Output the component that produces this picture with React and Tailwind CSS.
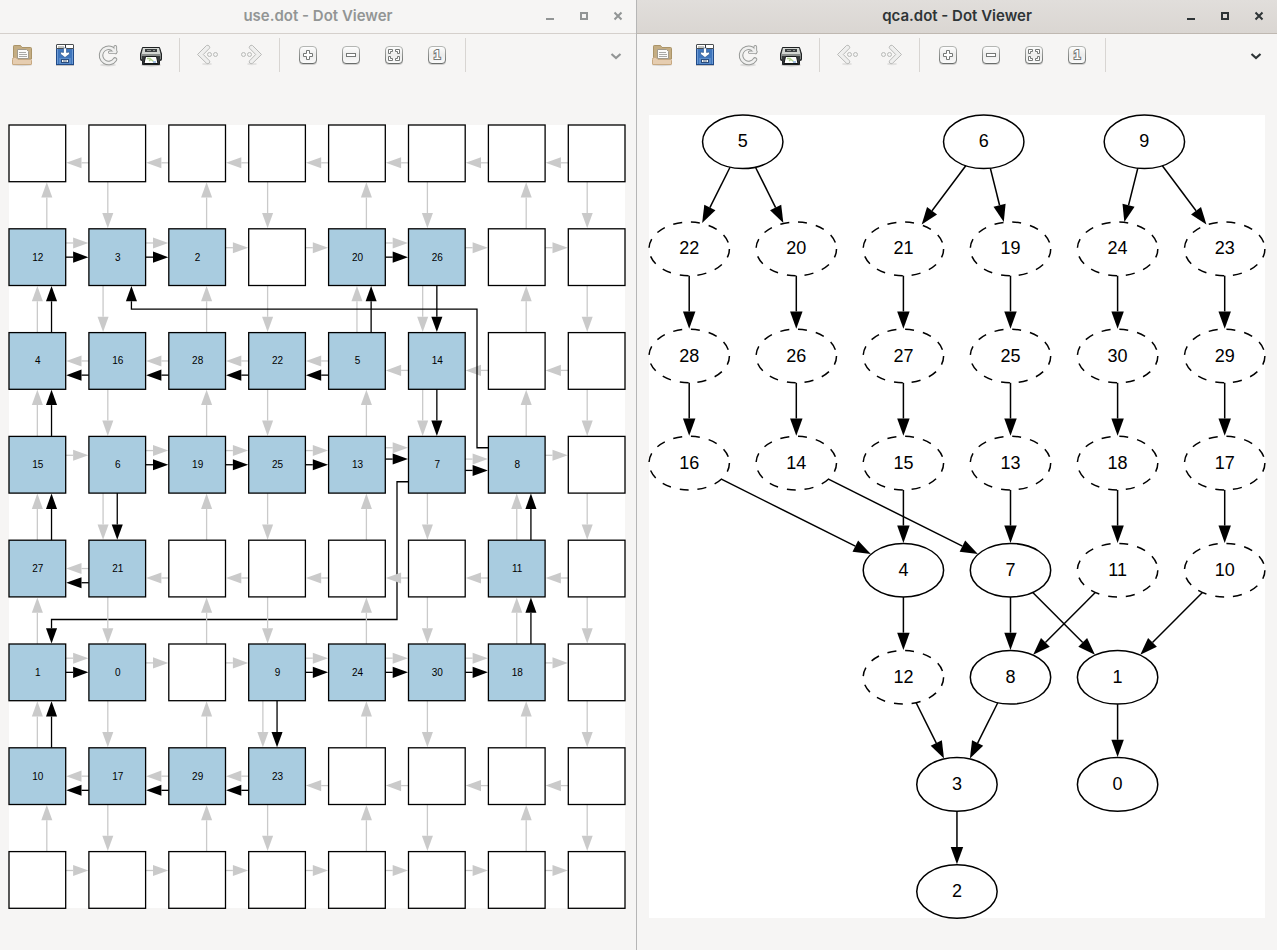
import React, { useId } from "react";

/* ---------- toolbar icons ---------- */

function OpenIcon() {
  return (
    <svg viewBox="0 0 24 24" className="size-6" aria-hidden="true">
      <ellipse cx="12" cy="22" rx="10" ry="1.2" fill="#000" opacity="0.12" />
      <path d="M3.5 20V3.2Q3.5 2.5 4.2 2.5H10.5L12 4.5H20.5Q21.5 4.5 21.5 5.5V16H3.5Z" fill="#c4ad83" stroke="#ab9468" />
      <path d="M7.5 15.5V6.5H16.5L18.5 8.5V15.5Z" fill="#fbfbfa" stroke="#a19a8c" />
      <path d="M9 9.5H16M9 11.5H17M9 13.5H17" stroke="#a9a9a6" />
      <path d="M2.5 21V16.5Q2.5 14.5 4.2 14.5H6L8 16.5H20.5Q21.5 16.5 21.5 17.5V21Q21.5 21.5 21 21.5H3Q2.5 21.5 2.5 21Z" fill="#e6cdb0" stroke="#c7a982" />
    </svg>
  );
}

function SaveIcon() {
  return (
    <svg viewBox="0 0 24 24" className="size-6" aria-hidden="true">
      <path d="M3 22.5H21" stroke="#000" opacity="0.2" />
      <rect x="3.5" y="5.5" width="17" height="16" fill="#3f76bd" stroke="#204a87" />
      <path d="M4.5 6V21M19.5 6V21" stroke="#6e9bd4" />
      <rect x="3.5" y="1.5" width="17" height="4" rx="0.5" fill="#fff" stroke="#4a4d4f" />
      <path d="M5 4H11" stroke="#c5c7c4" strokeWidth="2" />
      <path d="M12.5 2V5" stroke="#333" />
      <rect x="6" y="15" width="12" height="6" fill="#5b8cc9" />
      <path d="M10.5 5V9.5L7.5 9V11L12 14.5L16.5 11V9L13.5 9.5V5Z" fill="#fff" stroke="#2a4f80" strokeWidth="0.6" />
      <rect x="8.5" y="16.5" width="7" height="3" fill="#f4f4f2" stroke="#2a4c7c" />
      <path d="M10 18H14" stroke="#58718f" />
    </svg>
  );
}

function ReloadIcon() {
  const ring = "M19 16.5A7.6 7.6 0 1 1 16 5.6L19.3 8.8";
  const hook = "M19.3 3.8V9.3H13.8";
  return (
    <svg viewBox="0 0 24 24" className="size-6" fill="none" strokeLinecap="round" strokeLinejoin="round" aria-hidden="true">
      <ellipse cx="12" cy="22" rx="8" ry="1.5" fill="#000" opacity="0.1" />
      <g stroke="#979997">
        <path d={ring} strokeWidth="4.6" />
        <path d={hook} strokeWidth="3.6" />
      </g>
      <g stroke="#f0f0ef">
        <path d={ring} strokeWidth="2.6" />
        <path d={hook} strokeWidth="1.8" />
      </g>
    </svg>
  );
}

function PrintIcon() {
  return (
    <svg viewBox="0 0 24 24" className="size-6" aria-hidden="true">
      <ellipse cx="12" cy="22" rx="10" ry="1.5" fill="#000" opacity="0.2" />
      <path d="M3.5 4.5H20.5L22.5 11V16.5Q22.5 17.5 21.5 17.5H20.5V21.5H3.5V17.5H2.5Q1.5 17.5 1.5 16.5V11Z" fill="#35393a" stroke="#1e2122" />
      <path d="M4 5H20L21.5 11H2.5Z" fill="#d3d6d2" />
      <rect x="6" y="6" width="12" height="3" fill="#3a3e3f" />
      <path d="M8 7.5H12M14 7.5H16" stroke="#8f9390" />
      <path d="M2 12H22" stroke="#888c8a" strokeWidth="2" />
      <path d="M2.5 13V16M21.5 13V16" stroke="#7e8280" />
      <path d="M6.5 13.5H17.5L19 20.5H5Z" fill="#fff" stroke="#131516" />
      <path d="M8 15.5H11L14.5 18.5M10 18L12 16" fill="none" stroke="#b4d493" strokeWidth="1.4" />
      <path d="M14 19H17" stroke="#8aaedb" strokeWidth="1.5" />
    </svg>
  );
}

function BackIcon({ flip }) {
  return (
    <svg viewBox="0 0 24 24" className={flip ? "size-6 -scale-x-100" : "size-6"} aria-hidden="true">
      <ellipse cx="11" cy="21" rx="5" ry="1.2" fill="#000" opacity="0.08" />
      <path d="M1.5 11.5L10.5 2.5Q12 1.7 13.3 3.2Q14.2 4.3 13.5 5.2L7.3 11.5L13.5 17.8Q14.2 18.9 13.3 20Q12 21.3 10.5 20.3Z" fill="#efefee" stroke="#b9bab8" />
      <circle cx="13.5" cy="11.5" r="2" fill="#f3f3f2" stroke="#b9bab8" />
      <circle cx="19.5" cy="11.5" r="2" fill="#f3f3f2" stroke="#b9bab8" />
    </svg>
  );
}

function KeyIcon({ children }) {
  const id = useId();
  return (
    <svg viewBox="0 0 24 24" className="size-6" aria-hidden="true">
      <defs>
        <linearGradient id={`${id}edge`} x1="0" y1="0" x2="0" y2="1">
          <stop offset="0" stopColor="#b4b6b3" />
          <stop offset="1" stopColor="#6a6d6b" />
        </linearGradient>
        <linearGradient id={`${id}face`} x1="0" y1="0" x2="0" y2="1">
          <stop offset="0" stopColor="#fefefe" />
          <stop offset="0.5" stopColor="#ececeb" />
          <stop offset="1" stopColor="#fbfbfb" />
        </linearGradient>
      </defs>
      <rect x="3" y="4" width="18" height="18" rx="4" fill="#000" opacity="0.15" />
      <rect x="3.5" y="3.5" width="17" height="17" rx="3.5" fill={`url(#${id}face)`} stroke={`url(#${id}edge)`} />
      {children}
    </svg>
  );
}

const glyph = { fill: "#fff", stroke: "#757876", strokeWidth: 1 };

function ZoomInIcon() {
  return (
    <KeyIcon>
      <path d="M10.5 7.5H13.5V10.5H16.5V13.5H13.5V16.5H10.5V13.5H7.5V10.5H10.5Z" {...glyph} />
    </KeyIcon>
  );
}

function ZoomOutIcon() {
  return (
    <KeyIcon>
      <rect x="7.5" y="10.5" width="9" height="3" {...glyph} />
    </KeyIcon>
  );
}

function ZoomFitIcon() {
  return (
    <KeyIcon>
      <path d="M6.5 6.5H10.5V8.5H8.5V10.5H6.5Z" {...glyph} />
      <path d="M13.5 6.5H17.5V10.5H15.5V8.5H13.5Z" {...glyph} />
      <path d="M6.5 13.5H8.5V15.5H10.5V17.5H6.5Z" {...glyph} />
      <path d="M15.5 13.5H17.5V17.5H13.5V15.5H15.5Z" {...glyph} />
    </KeyIcon>
  );
}

function ZoomOneIcon() {
  return (
    <KeyIcon>
      <text
        x="12"
        y="16"
        textAnchor="middle"
        fill="#fff"
        stroke="#757876"
        strokeWidth="2"
        paintOrder="stroke"
        className="font-['Liberation_Sans',sans-serif] text-[12px] font-bold"
      >
        1
      </text>
    </KeyIcon>
  );
}

/* ---------- window chrome ---------- */

function ToolButton({ label, children, disabled }) {
  return (
    <button type="button" aria-label={label} disabled={disabled} className="size-6 shrink-0">
      {children}
    </button>
  );
}

function Separator() {
  return <div role="separator" className="mx-4 h-[34px] w-px shrink-0 bg-[#d8d5d2]" />;
}

function WindowButton({ label, children }) {
  return (
    <button type="button" aria-label={label} className="flex h-8 w-[34px] items-center justify-center">
      <svg viewBox="0 0 16 16" className="size-4" fill="none" stroke="currentColor" strokeWidth="2" aria-hidden="true">
        {children}
      </svg>
    </button>
  );
}

function Window({ title, active, className, toolbarClass, canvasClass, children }) {
  return (
    <section aria-label={title} className={`flex min-w-0 flex-col bg-[#f6f5f4] ${className}`}>
      <header
        className={`grid h-[34px] grid-cols-[1fr_auto_1fr] items-center border-b pb-1 ${
          active
            ? "border-[#bfb8b1] bg-linear-to-b from-[#e1dedb] to-[#dad6d2] text-[#2e3436]"
            : "border-[#d5d0cc] text-[#929595]"
        }`}
      >
        <h1 className="col-start-2 whitespace-nowrap font-['Inter',sans-serif] text-[15px] leading-5 font-semibold">{title}</h1>
        <div className="flex justify-end pr-px">
          <WindowButton label="Minimize">
            <path d="M4 11H12" />
          </WindowButton>
          <WindowButton label="Maximize">
            <rect x="5" y="5" width="6" height="6" />
          </WindowButton>
          <WindowButton label="Close">
            <path d="M4.5 4.5L11.5 11.5M11.5 4.5L4.5 11.5" />
          </WindowButton>
        </div>
      </header>
      <div role="toolbar" aria-label="Graph tools" className={`flex h-[42px] items-center ${toolbarClass}`}>
        <div className="flex gap-[19px]">
          <ToolButton label="Open"><OpenIcon /></ToolButton>
          <ToolButton label="Export"><SaveIcon /></ToolButton>
          <ToolButton label="Reload"><ReloadIcon /></ToolButton>
          <ToolButton label="Print"><PrintIcon /></ToolButton>
        </div>
        <Separator />
        <div className="flex gap-[19px]">
          <ToolButton label="Back" disabled><BackIcon /></ToolButton>
          <ToolButton label="Forward" disabled><BackIcon flip /></ToolButton>
        </div>
        <Separator />
        <div className="flex gap-[19px]">
          <ToolButton label="Zoom in"><ZoomInIcon /></ToolButton>
          <ToolButton label="Zoom out"><ZoomOutIcon /></ToolButton>
          <ToolButton label="Zoom to fit"><ZoomFitIcon /></ToolButton>
          <ToolButton label="Normal size"><ZoomOneIcon /></ToolButton>
        </div>
        <Separator />
        <button
          type="button"
          aria-label="More tools"
          className={`ml-auto size-4 ${active ? "text-[#2e3436]" : "text-[#929595]"}`}
        >
          <svg viewBox="0 0 16 16" className="size-4" fill="none" stroke="currentColor" strokeWidth="2.2" aria-hidden="true">
            <path d="M3.5 7L8 11L12.5 7" />
          </svg>
        </button>
      </div>
      <div className={`flex flex-1 items-center pt-[6px] ${canvasClass}`}>{children}</div>
    </section>
  );
}

/* ---------- shared drawing ---------- */

/* A polyline that ends in a filled arrow head, its tip just short of the last point. */
function Arrow({ points, color, width, head }) {
  const [x1, y1] = points[points.length - 2];
  const [x2, y2] = points[points.length - 1];
  const len = Math.hypot(x2 - x1, y2 - y1);
  const ux = (x2 - x1) / len;
  const uy = (y2 - y1) / len;
  const tx = x2 - ux * 0.5;
  const ty = y2 - uy * 0.5;
  const bx = x2 - ux * head;
  const by = y2 - uy * head;
  const half = head * 0.35;
  const line = [...points.slice(0, -1), [bx, by]];
  return (
    <g>
      <polyline points={line.map((p) => p.join(",")).join(" ")} fill="none" stroke={color} strokeWidth={width} />
      <polygon
        points={`${tx},${ty} ${bx - uy * half},${by + ux * half} ${bx + uy * half},${by - ux * half}`}
        fill={color}
      />
    </g>
  );
}

/* ---------- grid graph ---------- */

const BOX = 56.7;
const DX = 79.9;
const DY = 103.8;

const cells = [
  ["", "", "", "", "", "", "", ""],
  ["12", "3", "2", "", "20", "26", "", ""],
  ["4", "16", "28", "22", "5", "14", "", ""],
  ["15", "6", "19", "25", "13", "7", "8", ""],
  ["27", "21", "", "", "", "", "11", ""],
  ["1", "0", "", "9", "24", "30", "18", ""],
  ["10", "17", "29", "23", "", "", "", ""],
  ["", "", "", "", "", "", "", ""],
];

/* Gaps in use: "row,left column" across and "column,upper row" down. */
const usedAcross = new Set([
  "1,0", "1,1", "1,4", "2,0", "2,1", "2,2", "2,3", "3,1", "3,2", "3,3", "3,4", "3,5",
  "4,0", "5,0", "5,3", "5,4", "5,5", "6,0", "6,1", "6,2",
]);
const usedDown = new Set([
  "0,1", "0,2", "0,3", "0,5", "1,3", "3,5", "4,1", "5,1", "5,2", "6,3", "6,4",
]);
/* Gaps whose ports are shared with a long wire: [spare, used] offsets. */
const acrossPorts = { "3,4": [0.2, 0.4], "3,5": [0.4, 0.6] };
const downPorts = { "0,4": 0.5, "1,1": 0.25 };

function buildGridEdges() {
  const spare = [];
  const used = [];
  for (let r = 0; r < 8; r++) {
    const right = r % 2 === 1;
    for (let c = 0; c < 7; c++) {
      const key = `${r},${c}`;
      const xa = c * DX + BOX;
      const xb = (c + 1) * DX;
      const make = (f) => {
        const y = r * DY + BOX * f;
        return right ? [[xa, y], [xb, y]] : [[xb, y], [xa, y]];
      };
      if (usedAcross.has(key)) {
        const [s, u] = acrossPorts[key] || (right ? [0.25, 0.5] : [0.5, 0.75]);
        spare.push(make(s));
        used.push(make(u));
      } else {
        spare.push(make(right ? 1 / 3 : 2 / 3));
      }
    }
  }
  for (let c = 0; c < 8; c++) {
    const down = c % 2 === 1;
    for (let r = 0; r < 7; r++) {
      const key = `${c},${r}`;
      const ya = r * DY + BOX;
      const yb = (r + 1) * DY;
      const make = (f) => {
        const x = c * DX + BOX * f;
        return down ? [[x, ya], [x, yb]] : [[x, yb], [x, ya]];
      };
      if (usedDown.has(key)) {
        spare.push(make(down ? 0.25 : 0.5));
        used.push(make(down ? 0.5 : 0.75));
      } else {
        spare.push(make(downPorts[key] || (down ? 1 / 3 : 2 / 3)));
      }
    }
  }
  return { spare, used };
}

const gridEdges = buildGridEdges();
const wireTo1 = [
  [5 * DX, 3 * DY + BOX * 0.8],
  [388, 3 * DY + BOX * 0.8],
  [388, 494.5],
  [BOX * 0.75, 494.5],
  [BOX * 0.75, 5 * DY],
];
const wireTo3 = [
  [6 * DX, 3 * DY + BOX * 0.2],
  [468, 3 * DY + BOX * 0.2],
  [468, 184.2],
  [DX + BOX * 0.75, 184.2],
  [DX + BOX * 0.75, DY + BOX],
];

function GridGraph() {
  return (
    <svg viewBox="0 0 616 783" className="h-auto w-full overflow-visible bg-white" role="img" aria-label="use.dot graph">
      <Arrow points={wireTo1} color="#000" width={1.3} head={15.8} />
      {gridEdges.spare.map((p, i) => (
        <Arrow key={i} points={p} color="#cacaca" width={1.3} head={15.8} />
      ))}
      {gridEdges.used.map((p, i) => (
        <Arrow key={i} points={p} color="#000" width={1.3} head={15.8} />
      ))}
      <Arrow points={wireTo3} color="#000" width={1.3} head={15.8} />
      {cells.map((row, r) =>
        row.map((label, c) => (
          <g key={`${r}-${c}`}>
            <rect
              x={c * DX}
              y={r * DY}
              width={BOX}
              height={BOX}
              fill={label ? "#a9cce0" : "#fff"}
              stroke="#000"
              strokeWidth="1.3"
            />
            {label && (
              <text
                x={c * DX + BOX / 2 + 0.5}
                y={r * DY + BOX / 2 + 3.5}
                textAnchor="middle"
                className="fill-black font-['Liberation_Sans',sans-serif] text-[10px]"
              >
                {label}
              </text>
            )}
          </g>
        ))
      )}
    </svg>
  );
}

/* ---------- tree graph ---------- */

const STEP = 107.1;
const RX = 40.2;
const RY = 26.8;

/* name: [column, row, dashed] */
const nodes = {
  5: [0.5, 0, false], 6: [2.75, 0, false], 9: [4.25, 0, false],
  22: [0, 1, true], 20: [1, 1, true], 21: [2, 1, true], 19: [3, 1, true], 24: [4, 1, true], 23: [5, 1, true],
  28: [0, 2, true], 26: [1, 2, true], 27: [2, 2, true], 25: [3, 2, true], 30: [4, 2, true], 29: [5, 2, true],
  16: [0, 3, true], 14: [1, 3, true], 15: [2, 3, true], 13: [3, 3, true], 18: [4, 3, true], 17: [5, 3, true],
  4: [2, 4, false], 7: [3, 4, false], 11: [4, 4, true], 10: [5, 4, true],
  12: [2, 5, true], 8: [3, 5, false], 1: [4, 5, false],
  3: [2.5, 6, false], 0: [4, 6, false],
  2: [2.5, 7, false],
};

const links = [
  [5, 22], [5, 20], [6, 21], [6, 19], [9, 24], [9, 23],
  [22, 28], [20, 26], [21, 27], [19, 25], [24, 30], [23, 29],
  [28, 16], [26, 14], [27, 15], [25, 13], [30, 18], [29, 17],
  [16, 4], [14, 7], [15, 4], [13, 7], [18, 11], [17, 10],
  [4, 12], [7, 8], [7, 1], [11, 8], [10, 1],
  [12, 3], [8, 3], [1, 0], [3, 2],
];

const centre = (n) => [RX + nodes[n][0] * STEP, RY + nodes[n][1] * STEP];

function rim(a, b) {
  const dx = b[0] - a[0];
  const dy = b[1] - a[1];
  const t = 1 / Math.hypot(dx / RX, dy / RY);
  return [a[0] + dx * t, a[1] + dy * t];
}

function TreeGraph() {
  return (
    <svg viewBox="0 0 616 803" className="h-auto w-full overflow-visible bg-white" role="img" aria-label="qca.dot graph">
      {links.map(([a, b]) => (
        <Arrow
          key={`${a}-${b}`}
          points={[rim(centre(a), centre(b)), rim(centre(b), centre(a))]}
          color="#000"
          width={1.5}
          head={17.8}
        />
      ))}
      {Object.entries(nodes).map(([name, [, , dashed]]) => {
        const [x, y] = centre(name);
        return (
          <g key={name}>
            <ellipse
              cx={x}
              cy={y}
              rx={RX}
              ry={RY}
              fill="none"
              stroke="#000"
              strokeWidth="1.5"
              strokeDasharray={dashed ? "8.93 8.93" : undefined}
            />
            <text x={x} y={y + 5.5} textAnchor="middle" className="fill-black font-['Liberation_Sans',sans-serif] text-[18px]">
              {name}
            </text>
          </g>
        );
      })}
    </svg>
  );
}

export default function App() {
  return (
    <main className="grid min-h-screen grid-cols-[637fr_640fr] bg-[#f6f5f4]">
      <Window
        title="use.dot - Dot Viewer"
        className="border-r border-[#b6b6b6]"
        toolbarClass="pl-[10px] pr-3"
        canvasClass="pl-[9px] pr-[11px]"
      >
        <GridGraph />
      </Window>
      <Window title="qca.dot - Dot Viewer" active className="" toolbarClass="px-[13px]" canvasClass="px-3">
        <TreeGraph />
      </Window>
    </main>
  );
}
